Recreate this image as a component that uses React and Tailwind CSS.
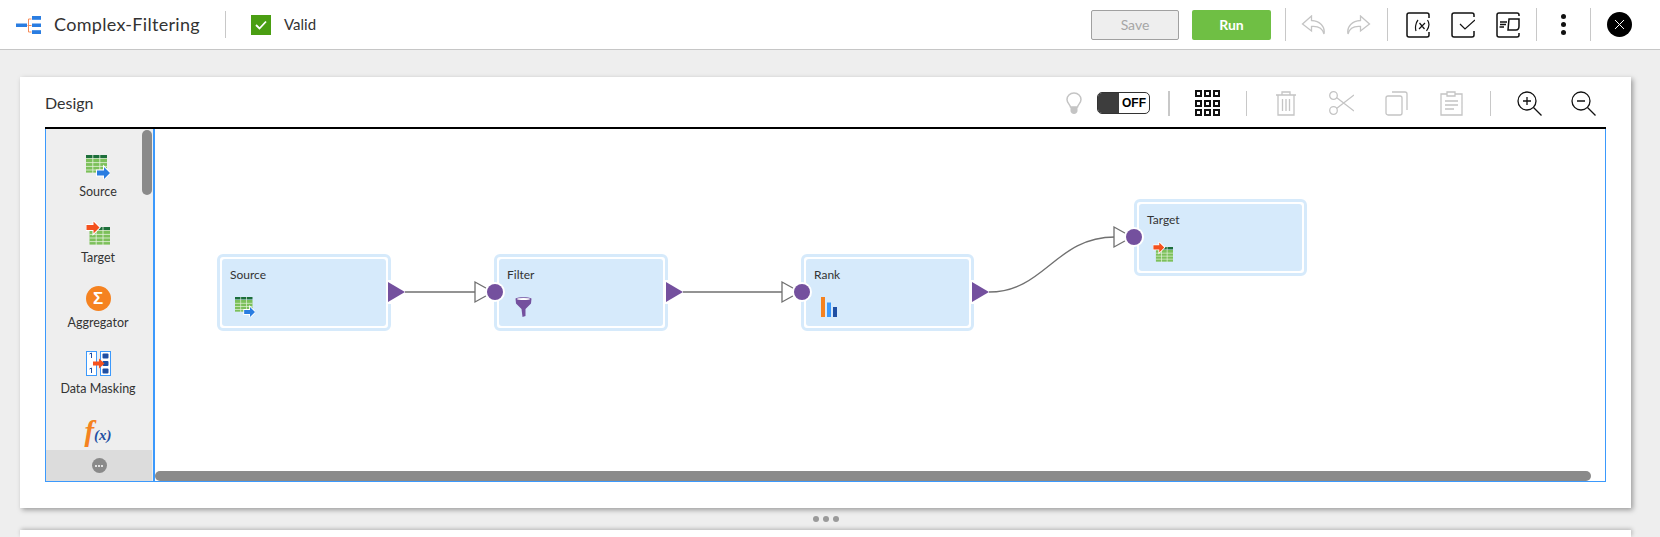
import React from 'react'

const Rule = ({ className = '' }) => <div className={`w-px shrink-0 bg-[#c8c8c8] ${className}`} />

const SourceIcon = ({ className }) => (
    <svg viewBox="0 0 24 24" className={className}>
        <rect x="0" y="0" width="21" height="3" fill="#1c6e3a" />
        <rect x="0" y="3.6" width="21" height="14" fill="#7cc05a" />
        <path d="M0 7.6h21M0 11.4h21M0 15h21M6.8 0v18M13.8 0v18" stroke="#e8f3e0" strokeWidth="0.8" />
        <path d="M11 15.500h7v-3.500l6 6-6 6v-3.500h-7z" fill="#2a7de1" stroke="#fff" strokeWidth="2" paintOrder="stroke" />
    </svg>
)

const TargetIcon = ({ className }) => (
    <svg viewBox="0 0 24 24" className={className}>
        <rect x="3.5" y="6" width="20.5" height="3" fill="#1c6e3a" />
        <rect x="3.5" y="9.6" width="20.5" height="14" fill="#7cc05a" />
        <path d="M3.5 13.4h20.5M3.5 17h20.5M3.5 20.6h20.5M10.2 6v18M17 6v18" stroke="#e8f3e0" strokeWidth="0.8" />
        <path d="M0.500 4h7v-3.500l6 6-6 6v-3.500h-7z" fill="#f4511e" stroke="#fff" strokeWidth="2" paintOrder="stroke" />
    </svg>
)

const MaskingIcon = () => (
    <svg viewBox="0 0 25 25" className="w-[25px] h-[25px]">
        <rect x="0.500" y="0.500" width="10" height="24" fill="#fff" stroke="#3b99fc" />
        <rect x="14.500" y="0.500" width="10" height="24" fill="#fff" stroke="#3b99fc" />
        <rect x="16.500" y="2.500" width="6" height="5" rx="1" fill="#1f4fa3" />
        <rect x="16.500" y="10" width="6" height="5" rx="1" fill="#1f4fa3" />
        <rect x="16.500" y="17.500" width="6" height="5" rx="1" fill="#1f4fa3" />
        <path d="M3.500 3l2-1v5M3.500 18l2-1v5" stroke="#1f4fa3" fill="none" strokeWidth="1" />
        <path d="M7 10.500h6v-3l5.500 5-5.500 5v-3h-6z" fill="#f4511e" />
    </svg>
)

const items = [
    { label: 'Source', box: 'h-6', icon: <SourceIcon className="w-6 h-6" /> },
    { label: 'Target', box: 'h-6', icon: <TargetIcon className="w-6 h-6" /> },
    {
        label: 'Aggregator',
        box: 'h-6',
        icon: (
            <div className="w-[25px] h-[25px] rounded-full bg-[#f58220] flex items-center justify-center text-white font-bold text-[17px] leading-none font-['Liberation_Sans',sans-serif]">Σ</div>
        ),
    },
    { label: 'Data Masking', box: 'h-6', icon: <MaskingIcon /> },
    {
        label: 'Expression',
        box: 'h-[28px]',
        icon: (
            <div className="h-[28px] flex items-start font-['Liberation_Serif',serif] italic font-bold leading-none">
                <span className="text-[#f58220] text-[29px]">f</span>
                <span className="text-[#1f4fa3] text-[15px] mt-[11px]">(x)</span>
            </div>
        ),
    },
]

const Sidebar = () => (
    <div className="relative w-[109px] shrink-0 bg-[#eeeeee] border-r-2 border-[#3b99fc] flex flex-col">
        <div className="flex-1 min-h-0 overflow-hidden pt-[26px] pr-[3px]">
            {items.map((item) => (
                <div key={item.label} className="h-[65.5px] flex flex-col items-center">
                    <div className={`flex items-center justify-center ${item.box}`}>{item.icon}</div>
                    <div className="mt-[5px] text-[12.500px] leading-4 text-[#333]">{item.label}</div>
                </div>
            ))}
        </div>
        <div className="h-[31px] shrink-0 mr-px bg-[#dcdcdc] flex items-center justify-center">
            <div className="w-[15px] h-[15px] rounded-full bg-[#8a8a8a] flex items-center justify-center gap-px">
                <span className="w-[2px] h-[2px] rounded-full bg-white" />
                <span className="w-[2px] h-[2px] rounded-full bg-white" />
                <span className="w-[2px] h-[2px] rounded-full bg-white" />
            </div>
        </div>
        <div className="absolute right-px top-[1px] w-[10px] h-[65px] rounded-full bg-[#8a8a8a]" />
    </div>
)

const FunnelIcon = () => (
    <svg viewBox="0 0 17 20" className="w-[17px] h-5">
        <path d="M0.500 1.500C3 -0.300 14 -0.300 16.500 1.500L16 6.500L10.500 12V19L7.500 20L6.500 12L1 6.500Z" fill="#74509e" />
        <ellipse cx="8.500" cy="2" rx="6.500" ry="1" fill="#fff" />
    </svg>
)

const RankIcon = () => (
    <svg viewBox="0 0 17 20" className="w-[17px] h-5">
        <rect x="0" y="0" width="4" height="20" fill="#f58220" />
        <rect x="6" y="5.500" width="4" height="14.500" fill="#3b99fc" />
        <rect x="12" y="10" width="4" height="10" fill="#1f4fa3" />
    </svg>
)

const nodes = [
    { label: 'Source', pos: 'left-[62px] top-[125px] w-[174px]', icon: <SourceIcon className="w-5 h-5" />, pad: 'ml-[5px]' },
    { label: 'Filter', pos: 'left-[339px] top-[125px] w-[174px]', icon: <FunnelIcon />, pad: 'ml-[8px]' },
    { label: 'Rank', pos: 'left-[646px] top-[125px] w-[173px]', icon: <RankIcon />, pad: 'ml-[7px]' },
    { label: 'Target', pos: 'left-[979px] top-[70px] w-[173px]', icon: <TargetIcon className="w-5 h-5" />, pad: 'ml-[6px]' },
]

const Node = ({ label, pos, icon, pad }) => (
    <div className={`absolute h-[77px] rounded-[6px] border-[3px] border-[#d6eafb] bg-white p-[2px] ${pos}`}>
        <div className="h-full rounded-[3px] bg-[#d6eafb] pl-[8px] pt-[8px]">
            <div className="text-[12px] leading-4 text-[#333]">{label}</div>
            <div className={`mt-[14px] ${pad}`}>{icon}</div>
        </div>
    </div>
)

const Port = ({ x, y }) => (
    <g>
        <path d={`M${x - 20} ${y - 10}L${x - 2} ${y}L${x - 20} ${y + 10}Z`} fill="#fff" stroke="#707070" strokeWidth="1.300" />
        <circle cx={x} cy={y} r="10" fill="#fff" />
        <circle cx={x} cy={y} r="8" fill="#74509e" />
    </g>
)

const Out = ({ x, y }) => <path d={`M${x} ${y - 10}L${x + 17} ${y}L${x} ${y + 10}Z`} fill="#74509e" />

const outs = [233, 511, 817]

const Links = () => (
    <svg className="absolute inset-0 w-full h-full pointer-events-none">
        {outs.map((x) => (
            <rect key={x} x={x - 1} y="151" width="4" height="24" fill="#fff" />
        ))}
        <path d="M250 163H320M528 163H627M834 163C890 163 900 108 960 108" fill="none" stroke="#707070" strokeWidth="1.300" />
        <Port x={340} y={163} />
        <Port x={647} y={163} />
        <Port x={979} y={108} />
        {outs.map((x) => (
            <Out key={x} x={x} y={163} />
        ))}
    </svg>
)

const HeaderIcon = ({ children, className = '' }) => (
    <svg viewBox="0 0 24 26" fill="none" stroke="#111" strokeWidth="1.500" className={`w-6 h-[26px] shrink-0 ${className}`}>
        {children}
    </svg>
)

const Header = () => (
    <header className="h-[50px] shrink-0 bg-white border-b border-[#c6c6c6] flex items-center pl-4 text-[#333]">
        <svg viewBox="0 0 25 18" className="w-[25px] h-[18px] shrink-0">
            <rect x="0" y="7.500" width="11" height="3.500" fill="#2a7de1" />
            <path d="M11.500 9.500h4M12.500 3v13h3M12.500 3h3" fill="none" stroke="#f58c5a" strokeWidth="1" />
            <rect x="16" y="0" width="9" height="3.800" fill="#2a7de1" />
            <rect x="16" y="7.500" width="9" height="3.500" fill="#2a7de1" />
            <rect x="16" y="14.200" width="9" height="3.800" fill="#2a7de1" />
        </svg>
        <div className="ml-[13px] w-[171px] text-[18px] tracking-[0.3px] whitespace-nowrap">Complex-Filtering</div>
        <Rule className="h-[27px]" />
        <div className="ml-[25px] w-5 h-5 bg-[#4a9e12] flex items-center justify-center">
            <svg viewBox="0 0 12 10" className="w-3 h-[10px]"><path d="M1 5l3.500 3.500L11 1.500" fill="none" stroke="#fff" strokeWidth="1.800" /></svg>
        </div>
        <div className="ml-[13px] text-[15px]">Valid</div>

        <button className="ml-auto w-[88px] h-[30px] rounded-[2px] border border-[#a0a0a0] bg-[#eeeeee] text-[14px] text-[#a6a6a6]">Save</button>
        <button className="ml-[13px] w-[79px] h-[30px] rounded-[2px] bg-[#6fbf44] text-[14px] font-bold text-white">Run</button>
        <Rule className="ml-[14px] h-[33px]" />
        <svg viewBox="0 0 24 20" fill="none" stroke="#c4c4c4" strokeWidth="1.300" className="ml-[15px] w-[25px] h-5 shrink-0">
            <path d="M10 1L1 9L10 16V11.500C16 11 21 13 22.500 19C24 11 18 6 10 5.500Z" />
        </svg>
        <svg viewBox="0 0 24 20" fill="none" stroke="#c4c4c4" strokeWidth="1.300" className="ml-[20px] w-[25px] h-5 shrink-0">
            <path d="M14 1L23 9L14 16V11.500C8 11 3 13 1.500 19C0 11 6 6 14 5.500Z" />
        </svg>
        <Rule className="ml-[16px] h-[33px]" />
        <HeaderIcon className="ml-[18px]">
            <path d="M23 6V3C23 2 22 1 21 1H3C2 1 1 2 1 3V23C1 24 2 25 3 25H21C22 25 23 24 23 23V20" />
            <path d="M12 8C9.500 11 9 16 10 19M13.500 11L18.500 17M19 11L13 17M21.500 8C23.500 11 23.500 15 20.500 19" strokeWidth="1.200" />
        </HeaderIcon>
        <HeaderIcon className="ml-[21px]">
            <path d="M23 5V3C23 2 22 1 21 1H3C2 1 1 2 1 3V23C1 24 2 25 3 25H21C22 25 23 24 23 23V19" />
            <path d="M9 12L14 17L24 8" strokeWidth="1.200" />
        </HeaderIcon>
        <HeaderIcon className="ml-[21px]">
            <path d="M23 4V3C23 2 22 1 21 1H3C2 1 1 2 1 3V23C1 24 2 25 3 25H21C22 25 23 24 23 23V21" />
            <path d="M4 10H11M4 12.500H10M3.500 15H8" strokeWidth="1.300" />
            <path d="M13 7H23V14C23 17 22 18 20 18H12Z" />
        </HeaderIcon>
        <Rule className="ml-[16px] h-[33px]" />
        <div className="ml-[23.500px] w-[6px] flex flex-col gap-[2.500px] items-center">
            <span className="w-[5.500px] h-[5.500px] rounded-full bg-[#111]" />
            <span className="w-[5.500px] h-[5.500px] rounded-full bg-[#111]" />
            <span className="w-[5.500px] h-[5.500px] rounded-full bg-[#111]" />
        </div>
        <Rule className="ml-[23.500px] h-[33px]" />
        <div className="ml-[16px] mr-[28px] w-[25px] h-[25px] rounded-full bg-black flex items-center justify-center">
            <svg viewBox="0 0 11 11" className="w-[11px] h-[11px]"><path d="M1 1l9 9M10 1l-9 9" stroke="#fff" strokeWidth="1" /></svg>
        </div>
    </header>
)

const ToolIcon = ({ children, className = '', stroke = '#c4c4c4', box = '0 0 24 26' }) => (
    <svg viewBox={box} fill="none" stroke={stroke} strokeWidth="1.300" className={`shrink-0 ${className}`}>
        {children}
    </svg>
)

const Toolbar = () => (
    <div className="h-[50px] pt-[2px] flex items-center pl-[25px] text-[#333]">
        <div className="text-[16px]">Design</div>
        <svg viewBox="0 0 16 22" className="ml-auto w-4 h-[22px] shrink-0">
            <path d="M8 1C3.800 1 1 4 1 7.500C1 11 4 12.500 4.500 15H11.500C12 12.500 15 11 15 7.500C15 4 12.200 1 8 1Z" fill="none" stroke="#c4c4c4" strokeWidth="1.500" />
            <path d="M4.500 15h7v4c0 1.500-1.500 3-3.500 3s-3.500-1.500-3.500-3z" fill="#c4c4c4" />
        </svg>
        <div className="ml-[15px] w-[53px] h-[22px] rounded-[5px] border border-[#333] bg-white flex overflow-hidden">
            <div className="w-[21px] bg-[#3d3d3d]" />
            <div className="flex-1 text-center text-[12px] leading-5 font-bold text-black font-['Liberation_Sans',sans-serif]">OFF</div>
        </div>
        <div className="ml-[18px] w-[2px] h-[25px] shrink-0 bg-[#c8c8c8]" />
        <div className="ml-[25px] w-[25px] h-[26px] shrink-0 grid grid-cols-3 gap-[2.500px]">
            {[...Array(9)].map((_, i) => (
                <span key={i} className="border-2 border-[#111]" />
            ))}
        </div>
        <Rule className="ml-[26px] h-[25px]" />
        <ToolIcon className="ml-[27px] w-6 h-[26px]">
            <path d="M2 5H22M8 5V2H16V5M4 5V25H20V5M8.500 9V21M12 9V21M15.500 9V21" />
        </ToolIcon>
        <ToolIcon box="0 0 26 26" className="ml-[30px] w-[26px] h-[26px]">
            <circle cx="5.500" cy="5.500" r="3.800" />
            <circle cx="5.500" cy="20.500" r="3.800" />
            <path d="M8.500 7.500L26 21M8.500 18.500L26 5" />
        </ToolIcon>
        <ToolIcon className="ml-[30px] w-6 h-[26px]">
            <rect x="2" y="6" width="16" height="19" rx="2" />
            <path d="M8 2H21C22 2 23 3 23 4V20" />
        </ToolIcon>
        <ToolIcon className="ml-[31px] w-6 h-[26px]">
            <path d="M8 4H2V25H23V4H16M8 2H16V6H8ZM6 11H19M6 15H19M6 19H15" />
        </ToolIcon>
        <Rule className="ml-[27px] h-[25px]" />
        <ToolIcon stroke="#111" box="0 0 25 25" className="ml-[26px] w-[25px] h-[25px]">
            <circle cx="10" cy="10" r="9" />
            <path d="M16.500 16.500L24.500 24.500M6 10H14M10 6V14" />
        </ToolIcon>
        <ToolIcon stroke="#111" box="0 0 25 25" className="ml-[29px] mr-[35px] w-[25px] h-[25px]">
            <circle cx="10" cy="10" r="9" />
            <path d="M16.500 16.500L24.500 24.500M6 10H14" />
        </ToolIcon>
    </div>
)

const App = () => (
    <div className="h-[537px] overflow-hidden bg-[#eeeeee] flex flex-col font-['Lato',sans-serif]">
        <Header />
        <main className="mt-[27px] ml-5 w-[1611px] h-[431px] shrink-0 bg-white shadow-[2px_2px_5px_rgba(0,0,0,0.35)]">
            <Toolbar />
            <div className="ml-[25px] w-[1561px] border-t-2 border-black">
                <div className="h-[353px] border border-t-0 border-[#3b99fc] flex">
                    <Sidebar />
                    <div className="relative flex-1 min-w-0 overflow-hidden">
                        {nodes.map((node) => (
                            <Node key={node.label} {...node} />
                        ))}
                        <Links />
                        <div className="absolute left-0 bottom-0 w-[1436px] h-[10px] rounded-full bg-[#8a8a8a]" />
                    </div>
                </div>
            </div>
        </main>
        <div className="h-[22px] shrink-0 w-[1611px] ml-5 flex items-center justify-center gap-[4px]">
            <span className="w-[6px] h-[6px] rounded-full bg-[#9a9a9a]" />
            <span className="w-[6px] h-[6px] rounded-full bg-[#9a9a9a]" />
            <span className="w-[6px] h-[6px] rounded-full bg-[#9a9a9a]" />
        </div>
        <div className="ml-5 w-[1611px] flex-1 bg-white shadow-[1px_-1px_4px_rgba(0,0,0,0.25)]" />
    </div>
)

export default App
